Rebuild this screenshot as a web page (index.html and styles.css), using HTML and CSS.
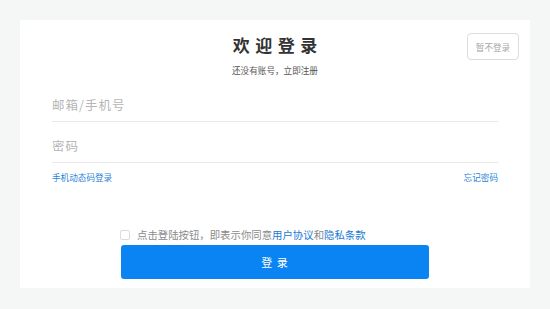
FILE: index.html
```html
<!DOCTYPE html>
<html lang="zh-CN">
<head>
<meta charset="utf-8">
<title>欢迎登录</title>
<link rel="stylesheet" href="styles.css">
</head>
<body>
<div class="page">
  <div class="card">
    <div class="header">
      <div class="spacer"></div>
      <div class="heading">
        <h1 class="title">欢迎登录</h1>
        <p class="subtitle">还没有账号，立即注册</p>
      </div>
      <div class="skip-wrap"><button class="skip">暂不登录</button></div>
    </div>
    <div class="field field-first"><input class="input" type="text" placeholder="邮箱/手机号"></div>
    <div class="field"><input class="input" type="password" placeholder="密码"></div>
    <div class="links">
      <a class="link" href="#">手机动态码登录</a>
      <a class="link" href="#">忘记密码</a>
    </div>
    <div class="submit-area">
      <label class="agree">
        <input class="check" type="checkbox">
        <span>点击登陆按钮，即表示你同意<a class="agree-link" href="#">用户协议</a>和<a class="agree-link" href="#">隐私条款</a></span>
      </label>
      <button class="login">登 录</button>
    </div>
  </div>
</div>
</body>
</html>
```
FILE: styles.css
```css
* { box-sizing: border-box; }
html, body { margin: 0; padding: 0; }
body {
  background: #f5f6f6;
  font-family: "Noto Sans CJK SC", "Noto Sans", "Liberation Sans", sans-serif;
  width: 550px;
  height: 309px;
  overflow: hidden;
}
.page { padding: 20px 20px 0 20px; }
.card {
  background: #ffffff;
  height: 268px;
  padding: 13px 32px 0 32px;
}
.header {
  display: grid;
  grid-template-columns: 1fr auto 1fr;
  align-items: start;
}
.heading { text-align: center; }
.title {
  margin: 0;
  font-size: 17px;
  line-height: 24px;
  font-weight: 600;
  color: #333333;
  letter-spacing: 5.5px;
  padding-left: 5.5px;
}
.subtitle {
  margin: 7px 0 0 0;
  font-size: 8.6px;
  line-height: 12px;
  color: #555555;
}
.skip-wrap {
  display: flex;
  justify-content: flex-end;
  margin-right: -21px;
}
.skip {
  width: 52px;
  height: 27px;
  border: 1px solid #dcdcdc;
  border-radius: 4px;
  background: #fff;
  color: #a8a8a8;
  font-family: inherit;
  font-size: 8.6px;
  padding: 0;
}
.field {
  padding-top: 6px;
  border-bottom: 1px solid #e9e9e9;
}
.field-first { margin-top: 5px; }
.input {
  display: block;
  width: 100%;
  height: 34px;
  border: none;
  outline: none;
  padding: 0;
  font-family: inherit;
  font-size: 12.5px;
  letter-spacing: 1px;
  color: #333;
  background: transparent;
}
.input::placeholder { color: #b5b5b5; }
.links {
  display: flex;
  justify-content: space-between;
  margin-top: 8px;
  line-height: 12px;
}
.link {
  font-size: 8.6px;
  color: #2a82d8;
  text-decoration: none;
}
.submit-area {
  width: 308px;
  margin: 45px auto 0 auto;
}
.agree {
  display: flex;
  align-items: center;
  height: 14px;
  font-size: 10.4px;
  line-height: 14px;
  color: #8a8a8a;
}
.check {
  appearance: none;
  -webkit-appearance: none;
  margin: 0 7px 0 -1px;
  width: 10px;
  height: 10px;
  border: 1px solid #dcdcdc;
  border-radius: 2px;
  background: #fff;
  flex: none;
}
.agree-link {
  color: #1a79d2;
  text-decoration: none;
}
.login {
  display: block;
  width: 308px;
  height: 34px;
  margin-top: 3px;
  border: none;
  border-radius: 3px;
  background: #0b84f3;
  color: #ffffff;
  font-family: inherit;
  font-size: 11px;
  letter-spacing: 1px;
}
```
